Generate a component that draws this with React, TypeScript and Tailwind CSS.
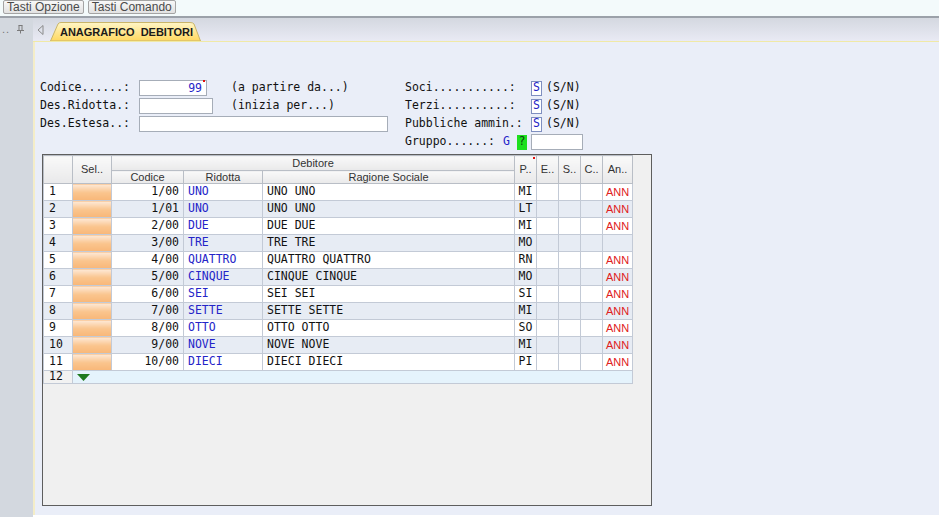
import React from "react"

const mono = "font-['DejaVu_Sans_Mono',monospace] text-[11.5px]"
const sans = "font-['Liberation_Sans',Arial,sans-serif] text-[11px]"

const rows: [string, string, string, string, boolean][] = [
    ["1/00", "UNO", "UNO UNO", "MI", true],
    ["1/01", "UNO", "UNO UNO", "LT", true],
    ["2/00", "DUE", "DUE DUE", "MI", true],
    ["3/00", "TRE", "TRE TRE", "MO", false],
    ["4/00", "QUATTRO", "QUATTRO QUATTRO", "RN", true],
    ["5/00", "CINQUE", "CINQUE CINQUE", "MO", true],
    ["6/00", "SEI", "SEI SEI", "SI", true],
    ["7/00", "SETTE", "SETTE SETTE", "MI", true],
    ["8/00", "OTTO", "OTTO OTTO", "SO", true],
    ["9/00", "NOVE", "NOVE NOVE", "MI", true],
    ["10/00", "DIECI", "DIECI DIECI", "PI", true],
]

function ToolButton({ label }: { label: string }) {
    return (
        <div className={`h-[14px] px-[3px] flex items-center border border-[#a4a4a4] rounded-[2px] bg-gradient-to-b from-[#f8f8f8] to-[#e2e2e2] text-[#4a4a4a] leading-none font-['Liberation_Sans',Arial,sans-serif] text-[12px]`}>
            {label}
        </div>
    )
}

function SnBox() {
    return (
        <div className="w-[11px] h-[15px] border border-[#7f8fc0] bg-white text-[#2424c8] flex items-center justify-center leading-none">
            S
        </div>
    )
}

function HeadCell({ children, rowSpan, colSpan, dot }: { children?: React.ReactNode; rowSpan?: number; colSpan?: number; dot?: boolean }) {
    return (
        <th
            rowSpan={rowSpan}
            colSpan={colSpan}
            className={`relative p-0 font-normal text-[#333] border border-[#b9bec6] bg-gradient-to-b from-[#f9f9f9] to-[#e9e9ea] leading-none ${sans}`}
        >
            {children}
            {dot && <span className="absolute right-[1px] top-[1px] w-[2px] h-[2px] bg-[#e01010]" />}
        </th>
    )
}

export default function App() {
    return (
        <div className="w-[939px] h-[517px] overflow-hidden flex flex-col bg-[#eaeef8]">
            {/* Top toolbar */}
            <div className="h-[16px] bg-[#f3fafb] flex items-start gap-[4px] pl-[3px]">
                <ToolButton label="Tasti Opzione" />
                <ToolButton label="Tasti Comando" />
            </div>
            <div className="h-[2px] bg-[#9ba1a9]" />

            <div className="flex flex-1 min-h-0">
                {/* Left dock strip */}
                <div className="w-[33px] bg-[#d3d8df] flex flex-col">
                    <div className="h-[22px] flex items-center gap-[6px] pl-[2px] text-[#777] leading-none">
                        <span className={`${sans} text-[10px] tracking-[1px]`}>..</span>
                        <svg width="9" height="10" viewBox="0 0 9 10">
                            <path d="M2.5 1.5h4M3 1.5v5M6 1.5v5M1 6.5h7M4.5 6.5v3" stroke="#7a7a7a" strokeWidth="1" fill="none" />
                        </svg>
                    </div>
                </div>

                {/* Main area */}
                <div className="flex-1 flex flex-col min-w-0">
                    {/* Tab bar */}
                    <div className="h-[23px] bg-gradient-to-b from-[#d4d8e0] to-[#e9eaf4] flex items-end pl-[4px]">
                        <div className="h-[23px] flex items-center mr-[6px]">
                            <svg width="7" height="10" viewBox="0 0 7 10">
                                <path d="M6 0.5L1 5L6 9.5Z" stroke="#8a8a8a" strokeWidth="1" fill="none" />
                            </svg>
                        </div>
                        <div className="relative w-[151px] h-[19px] flex items-center justify-center">
                            <svg className="absolute inset-0" width="151" height="19" viewBox="0 0 151 19">
                                <defs>
                                    <linearGradient id="tabg" x1="0" y1="0" x2="0" y2="1">
                                        <stop offset="0" stopColor="#fff6c6" />
                                        <stop offset="1" stopColor="#ffd860" />
                                    </linearGradient>
                                </defs>
                                <path d="M0.5 19L8 2Q9 0.5 11 0.5L140 0.5Q143 0.5 144 2L150.5 19Z" fill="url(#tabg)" stroke="#c9b56a" strokeWidth="1" />
                            </svg>
                            <span className="relative font-['Liberation_Sans',Arial,sans-serif] text-[11px] font-bold text-[#1a1a1a] pl-[2px] pt-[2px]">
                                ANAGRAFICO&nbsp; DEBITORI
                            </span>
                        </div>
                    </div>
                    <div className="h-[1px] bg-[#f0e9a6]" />

                    {/* Content */}
                    <div className={`flex-1 flex flex-col border-l-2 border-[#f4edc8] bg-[#eaeef8] pl-[5px] pt-[37px] ${mono} text-[#111]`}>
                        {/* Filter form */}
                        <div className="flex">
                            <div className="w-[365px] flex flex-col">
                                <div className="h-[18px] flex items-center">
                                    <span className="w-[99px]">Codice......:</span>
                                    <div className="relative w-[68px] h-[16px] bg-white border border-[#a6adb8] text-right pr-[4px] text-[#2424c8] leading-[14px]">
                                        99
                                        <span className="absolute right-[1px] -top-[1px] w-[2px] h-[2px] bg-[#e01010]" />
                                    </div>
                                    <span className="ml-[24px]">(a partire da...)</span>
                                </div>
                                <div className="h-[18px] flex items-center">
                                    <span className="w-[99px]">Des.Ridotta.:</span>
                                    <div className="w-[74px] h-[16px] bg-white border border-[#a6adb8]" />
                                    <span className="ml-[18px]">(inizia per...)</span>
                                </div>
                                <div className="h-[18px] flex items-center">
                                    <span className="w-[99px]">Des.Estesa..:</span>
                                    <div className="w-[249px] h-[16px] bg-white border border-[#a6adb8]" />
                                </div>
                            </div>
                            <div className="flex flex-col">
                                <div className="h-[18px] flex items-center">
                                    <span className="w-[126px]">Soci...........:</span>
                                    <SnBox />
                                    <span className="ml-[4px]">(S/N)</span>
                                </div>
                                <div className="h-[18px] flex items-center">
                                    <span className="w-[126px]">Terzi..........:</span>
                                    <SnBox />
                                    <span className="ml-[4px]">(S/N)</span>
                                </div>
                                <div className="h-[18px] flex items-center">
                                    <span className="w-[126px]">Pubbliche ammin.:</span>
                                    <SnBox />
                                    <span className="ml-[4px]">(S/N)</span>
                                </div>
                                <div className="h-[18px] flex items-center">
                                    <span className="w-[98px]">Gruppo......:</span>
                                    <span className="w-[14px] text-[#2424c8]">G</span>
                                    <span className="w-[10px] h-[15px] bg-[#1ee01e] text-[#104010] flex items-center justify-center leading-none">?</span>
                                    <div className="ml-[4px] w-[52px] h-[16px] bg-white border border-[#a6adb8]" />
                                </div>
                            </div>
                        </div>

                        {/* Grid */}
                        <div className="ml-[2px] mt-[3px] w-[610px] h-[352px] border border-[#5e5e5e] bg-[#f0f0f0]">
                            <table className="table-fixed border-collapse w-[589px]">
                                <colgroup>
                                    <col className="w-[29px]" />
                                    <col className="w-[39px]" />
                                    <col className="w-[72px]" />
                                    <col className="w-[79px]" />
                                    <col className="w-[252px]" />
                                    <col className="w-[22px]" />
                                    <col className="w-[22px]" />
                                    <col className="w-[22px]" />
                                    <col className="w-[22px]" />
                                    <col className="w-[30px]" />
                                </colgroup>
                                <thead>
                                    <tr className="h-[15px]">
                                        <HeadCell rowSpan={2} />
                                        <HeadCell rowSpan={2}>Sel..</HeadCell>
                                        <HeadCell colSpan={3}>Debitore</HeadCell>
                                        <HeadCell rowSpan={2} dot>P..</HeadCell>
                                        <HeadCell rowSpan={2}>E..</HeadCell>
                                        <HeadCell rowSpan={2}>S..</HeadCell>
                                        <HeadCell rowSpan={2}>C..</HeadCell>
                                        <HeadCell rowSpan={2}>An..</HeadCell>
                                    </tr>
                                    <tr className="h-[13px]">
                                        <HeadCell>Codice</HeadCell>
                                        <HeadCell>Ridotta</HeadCell>
                                        <HeadCell>Ragione Sociale</HeadCell>
                                    </tr>
                                </thead>
                                <tbody>
                                    {rows.map(([codice, ridotta, ragione, prov, ann], i) => {
                                        const bg = i % 2 === 0 ? "bg-white" : "bg-[#e7ecf4]"
                                        const cell = `p-0 border border-[#c3cad6] leading-none whitespace-pre overflow-hidden ${bg}`
                                        return (
                                            <tr key={i} className="h-[17px]">
                                                <td className={`${cell} pl-[5px]`}>{i + 1}</td>
                                                <td className="p-0 border border-[#c3cad6] bg-gradient-to-b from-[#fde9d6] via-[#fac58e] to-[#f8b778]" />
                                                <td className={`${cell} text-right pr-[4px]`}>{codice}</td>
                                                <td className={`${cell} pl-[4px] text-[#2424c8]`}>{ridotta}</td>
                                                <td className={`${cell} pl-[4px]`}>{ragione}</td>
                                                <td className={`${cell} text-center`}>{prov}</td>
                                                <td className={cell} />
                                                <td className={cell} />
                                                <td className={cell} />
                                                <td className={`${cell} text-center text-[#e02020] ${sans}`}>{ann ? "ANN" : ""}</td>
                                            </tr>
                                        )
                                    })}
                                    <tr className="h-[13px]">
                                        <td className="p-0 pl-[5px] border border-[#c3cad6] bg-[#f2f2f2] leading-none">12</td>
                                        <td colSpan={9} className="p-0 border border-[#c3cad6] bg-[#e5f3fc]">
                                            <svg className="ml-[4px]" width="13" height="7" viewBox="0 0 13 7">
                                                <path d="M0 0H13L6.5 7Z" fill="#1f7a1f" />
                                            </svg>
                                        </td>
                                    </tr>
                                </tbody>
                            </table>
                        </div>
                    </div>
                    <div className="h-[2px] bg-white" />
                </div>
            </div>
        </div>
    )
}
